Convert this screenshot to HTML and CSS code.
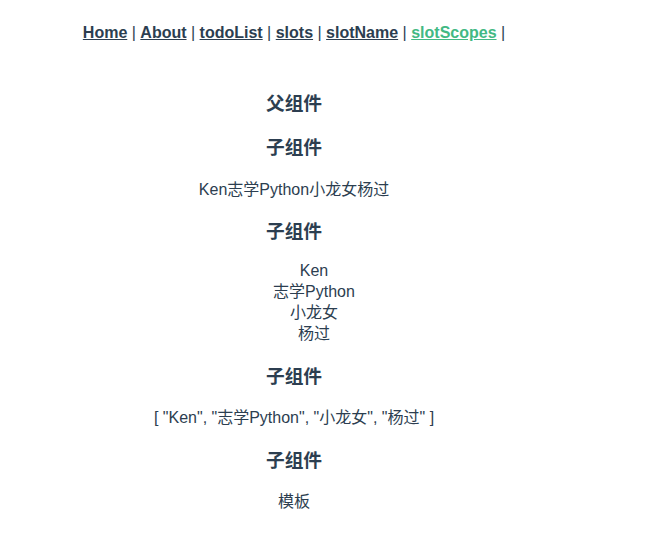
FILE: index.html
```html
<!DOCTYPE html>
<html lang="zh-CN">
<head>
<meta charset="utf-8">
<title>slotScopes</title>
<link rel="stylesheet" href="styles.css">
</head>
<body>
<div class="app">
  <nav class="nav">
    <a href="#" class="nav-link">Home</a> |
    <a href="#" class="nav-link">About</a> |
    <a href="#" class="nav-link">todoList</a> |
    <a href="#" class="nav-link">slots</a> |
    <a href="#" class="nav-link">slotName</a> |
    <a href="#" class="nav-link active">slotScopes</a> |
  </nav>
  <h3 class="title">父组件</h3>
  <h3 class="title">子组件</h3>
  <p class="text">Ken志学Python小龙女杨过</p>
  <h3 class="title title-tight">子组件</h3>
  <ul class="list">
    <li>Ken</li>
    <li>志学Python</li>
    <li>小龙女</li>
    <li>杨过</li>
  </ul>
  <h3 class="title">子组件</h3>
  <p class="text">[ "Ken", "志学Python", "小龙女", "杨过" ]</p>
  <h3 class="title">子组件</h3>
  <p class="text">模板</p>
</div>
</body>
</html>
```

FILE: styles.css
```css
html, body {
  background: #ffffff;
}
body {
  margin: 8px;
  font-family: "Liberation Sans", Arial, "Noto Sans CJK SC", sans-serif;
  font-size: 16px;
  color: #2c3e50;
}
.app {
  width: 572px;
  text-align: center;
}
.nav {
  padding: 16px 0 30px;
  line-height: 18px;
}
.nav-link {
  font-weight: bold;
  color: #2c3e50;
}
.nav-link.active {
  color: #42b983;
}
.title {
  font-size: 18.72px;
  font-weight: bold;
  line-height: 24px;
  padding-top: 1.5px;
  margin: 18.72px 0;
}
.title-tight {
  margin-bottom: 16px;
}
.text {
  margin: 16px 0;
  line-height: 21px;
}
.list {
  margin: 16px 0;
  padding-left: 40px;
  list-style: none;
  line-height: 21px;
}
```
